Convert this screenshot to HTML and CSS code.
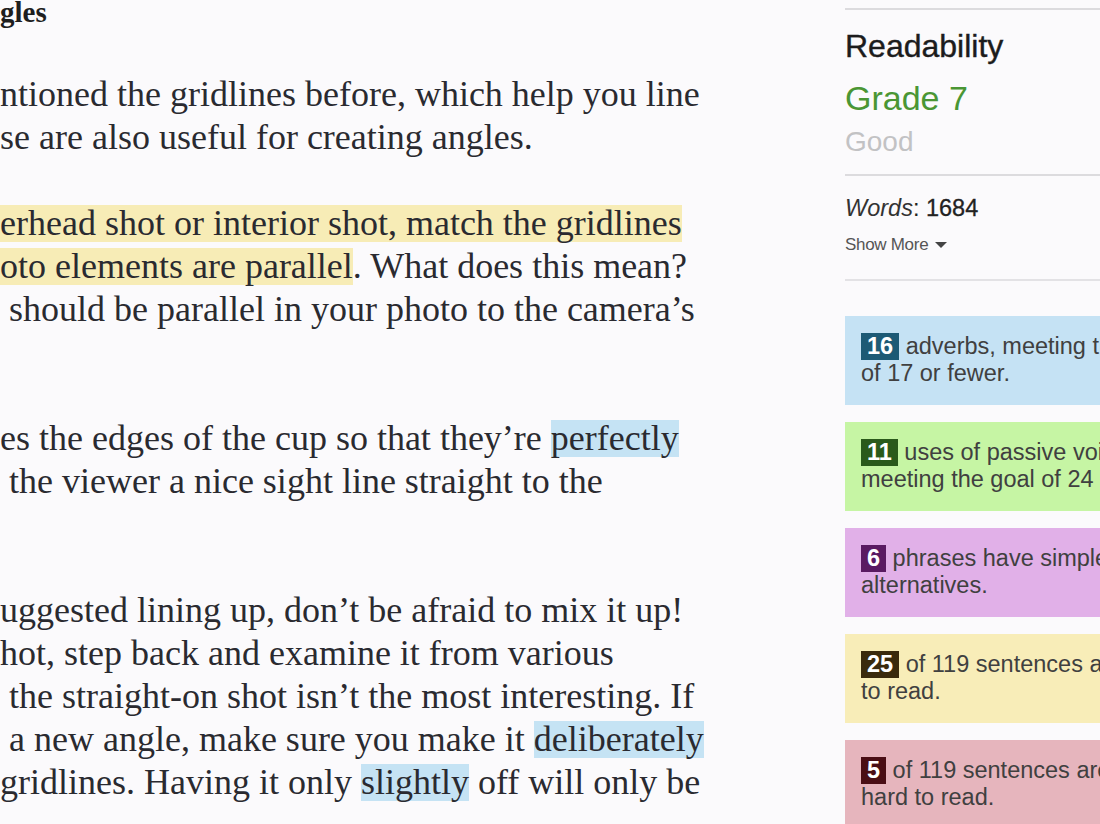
FILE: index.html
```html
<!DOCTYPE html>
<html>
<head>
<meta charset="utf-8">
<link rel="stylesheet" href="styles.css">
</head>
<body>
<div class="page">
  <main class="editor">
    <h2 class="heading">gles</h2>
    <div class="para">
      <div class="line">ntioned the gridlines before, which help you line</div>
      <div class="line">se are also useful for creating angles.</div>
    </div>
    <div class="para">
      <div class="line"><span class="hl hl-yellow">erhead shot or interior shot, match the gridlines </span></div>
      <div class="line"><span class="hl hl-yellow">oto elements are parallel</span>. What does this mean?</div>
      <div class="line">&nbsp;should be parallel in your photo to the camera’s</div>
      <div class="line"></div>
    </div>
    <div class="para">
      <div class="line">es the edges of the cup so that they’re <span class="hl hl-blue">perfectly</span></div>
      <div class="line">&nbsp;the viewer a nice sight line straight to the</div>
      <div class="line"></div>
    </div>
    <div class="para">
      <div class="line">uggested lining up, don’t be afraid to mix it up!</div>
      <div class="line">hot, step back and examine it from various</div>
      <div class="line">&nbsp;the straight-on shot isn’t the most interesting. If</div>
      <div class="line">&nbsp;a new angle, make sure you make it <span class="hl hl-blue">deliberately</span></div>
      <div class="line">gridlines. Having it only <span class="hl hl-blue">slightly</span> off will only be</div>
    </div>
  </main>
  <aside class="sidebar">
    <section class="block readability">
      <h3 class="title">Readability</h3>
      <div class="grade">Grade 7</div>
      <div class="verdict">Good</div>
    </section>
    <section class="block stats">
      <div class="words"><em>Words</em>: <span class="num">1684</span></div>
      <div class="more">Show More <span class="caret"></span></div>
    </section>
    <section class="cards">
      <div class="card blue"><span class="badge">16</span> adverbs, meeting the goal<br>of 17 or fewer.</div>
      <div class="card green"><span class="badge">11</span> uses of passive voice,<br>meeting the goal of 24</div>
      <div class="card purple"><span class="badge">6</span> phrases have simpler<br>alternatives.</div>
      <div class="card yellow"><span class="badge">25</span> of 119 sentences are hard<br>to read.</div>
      <div class="card red"><span class="badge">5</span> of 119 sentences are very<br>hard to read.</div>
    </section>
  </aside>
</div>
</body>
</html>
```
FILE: styles.css
```css
html, body {
  margin: 0;
  padding: 0;
  background: #fbfafc;
  overflow: hidden;
}
.page {
  display: flex;
  width: 1100px;
  height: 824px;
  overflow: hidden;
}
.editor {
  flex: none;
  width: 845px;
  overflow: hidden;
  font-family: "Liberation Serif", "Times New Roman", serif;
  font-size: 36px;
  color: #2a2a30;
}
.heading {
  margin: -9px 0 0;
  font-size: 29px;
  line-height: 43px;
  font-weight: bold;
  color: #1e1e1e;
  height: 43px;
}
.para {
  margin-top: 39px;
}
.para + .para {
  margin-top: 43px;
}
.line {
  height: 43px;
  line-height: 43px;
  white-space: nowrap;
}
.hl {
  background-repeat: no-repeat;
  background-size: 100% 37px;
  background-position: 0 2px;
}
.hl-yellow {
  background-image: linear-gradient(#f7ecb6, #f7ecb6);
}
.hl-blue {
  background-image: linear-gradient(#c5e3f4, #c5e3f4);
}
.sidebar {
  flex: none;
  width: 300px;
  font-family: "Liberation Sans", Arial, sans-serif;
  color: #222;
}
.block {
  border-top: 2px solid #dcdbde;
  margin-top: 8px;
}
.readability {
  padding-top: 16px;
  padding-bottom: 11px;
}
.title {
  margin: 0;
  font-size: 32px;
  font-weight: normal;
  line-height: 40px;
  color: #1c1c1c;
  -webkit-text-stroke: 0.4px #1c1c1c;
}
.grade {
  margin-top: 11px;
  font-size: 34px;
  line-height: 42px;
  color: #4a9634;
}
.verdict {
  margin-top: 2px;
  font-size: 28px;
  line-height: 42px;
  color: #c2c2c4;
}
.stats {
  margin-top: 0;
  padding-top: 17px;
  padding-bottom: 24px;
  border-bottom: 2px solid #e3e2e5;
}
.words {
  font-size: 23.5px;
  line-height: 30px;
  color: #222;
}
.words em {
  font-style: italic;
  color: #333;
}
.num {
  -webkit-text-stroke: 0.3px #222;
}
.more {
  margin-top: 12px;
  font-size: 17px;
  line-height: 20px;
  color: #555;
  letter-spacing: -0.3px;
  display: flex;
  align-items: center;
  gap: 7px;
}
.caret {
  width: 0;
  height: 0;
  border-left: 6px solid transparent;
  border-right: 6px solid transparent;
  border-top: 6px solid #444;
}
.cards {
  margin-top: 35px;
  display: flex;
  flex-direction: column;
  gap: 17px;
}
.card {
  height: 89px;
  box-sizing: border-box;
  padding: 17px 16px 0;
  font-size: 23.5px;
  line-height: 27px;
  color: #404040;
  white-space: nowrap;
}
.badge {
  display: inline-block;
  padding: 0 6px;
  font-weight: bold;
  color: #fff;
  line-height: 27px;
  height: 27px;
  vertical-align: top;
}
.blue { background: #c5e2f4; }
.blue .badge { background: #1d5a75; }
.green { background: #c6f5a4; }
.green .badge { background: #2a5a1b; }
.purple { background: #e1b0e8; }
.purple .badge { background: #5a1a62; }
.yellow { background: #f8edb8; }
.yellow .badge { background: #3a2a0c; }
.red { background: #e6b5bd; }
.red .badge { background: #4a0e15; }
```
